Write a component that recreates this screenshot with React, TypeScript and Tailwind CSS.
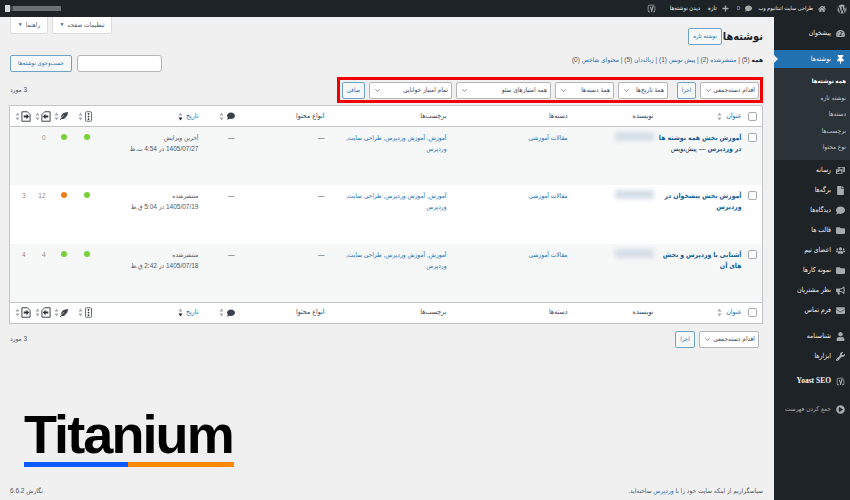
import React from "react";
import {
  FaWordpress,
  FaHome,
  FaComment,
  FaPlus,
  FaThumbtack,
  FaTachometerAlt,
  FaPhotoVideo,
  FaFile,
  FaFolder,
  FaUsers,
  FaBullhorn,
  FaEnvelope,
  FaUser,
  FaWrench,
  FaPlayCircle,
  FaFeatherAlt,
} from "react-icons/fa";
import { ChevronDown } from "lucide-react";

function YoastIcon({ className }: { className?: string }) {
  return (
    <svg viewBox="0 0 12 12" className={className}>
      <path d="M3 1h7v1H3a1 1 0 0 0-1 1v6a1 1 0 0 0 1 1h1v1H3a2 2 0 0 1-2-2V3a2 2 0 0 1 2-2z" fill="currentColor" />
      <path d="M10 3h1v6a2 2 0 0 1-2 2H8v-1h1a1 1 0 0 0 1-1z" fill="currentColor" />
      <path d="M3.5 3.5h1.6L6.2 7l1-4.5H9L6.6 10.5H5l.5-1.8z" fill="currentColor" />
    </svg>
  );
}

function SortArrows({ active }: { active?: boolean }) {
  return (
    <svg viewBox="0 0 5 9" className="w-[5px] h-[9px] shrink-0">
      <path d="M2.5 0.5L4.5 3.5H0.5z" fill="#a7aaad" />
      <path d="M2.5 8.5L0.5 5.5H4.5z" fill={active ? "#1d2327" : "#a7aaad"} />
    </svg>
  );
}

function TrafficIcon() {
  return (
    <svg viewBox="0 0 8 12" className="w-[7px] h-[11px]">
      <rect x="0.6" y="0.6" width="6.8" height="10.8" rx="1" fill="none" stroke="#50575e" strokeWidth="1" />
      <circle cx="4" cy="3" r="1" fill="#2c3338" />
      <circle cx="4" cy="6" r="1" fill="#2c3338" />
      <circle cx="4" cy="9" r="1" fill="#2c3338" />
    </svg>
  );
}

function LinkFileIcon({ flip }: { flip?: boolean }) {
  return (
    <svg viewBox="0 0 11 12" className={`w-[10px] h-[11px] ${flip ? "-scale-x-100" : ""}`}>
      <path d="M1 .8h6l3 3v7.4H1z" fill="none" stroke="#2c3338" strokeWidth="1" />
      <path d="M3 5h3V3l3 3-3 3V7H3z" fill="#2c3338" />
    </svg>
  );
}

function Checkbox() {
  return <input type="checkbox" className="appearance-none block w-[9px] h-[9px] rounded-[2px] border border-[#a7aaad] bg-white" />;
}

function Select({ label, width }: { label: string; width: string }) {
  return (
    <div className={`${width} h-[17px] flex items-center justify-between pr-[3px] pl-[4px] bg-white border border-[#b4b6b9] rounded-[2px] text-[6.5px] text-[#3c434a] whitespace-nowrap overflow-hidden`}>
      <span>{label}</span>
      <ChevronDown size={7} strokeWidth={2} className="shrink-0 text-[#2c3338]" />
    </div>
  );
}

function OutlineButton({ label, width }: { label: string; width: string }) {
  return (
    <div className={`${width} h-[17px] flex items-center justify-center bg-[#f6f7f7] border border-[#6ea3c7] rounded-[2px] text-[6px] text-[#2271b1] whitespace-nowrap`}>
      {label}
    </div>
  );
}

const navTop = [
  { label: "رسانه", icon: FaPhotoVideo },
  { label: "برگه‌ها", icon: FaFile },
  { label: "دیدگاه‌ها", icon: FaComment },
  { label: "قالب ها", icon: FaFolder },
  { label: "اعضای تیم", icon: FaUsers },
  { label: "نمونه کارها", icon: FaFolder },
  { label: "نظر مشتریان", icon: FaBullhorn },
  { label: "فرم تماس", icon: FaEnvelope },
];

const subMenu = ["همه نوشته‌ها", "نوشته تازه", "دسته‌ها", "برچسب‌ها", "نوع محتوا"];

function NavItem({ label, icon: Icon, className = "" }: { label: string; icon: React.ElementType; className?: string }) {
  return (
    <div className={`h-[20px] flex items-center pr-[5px] gap-[5px] text-[6.8px] text-[#f0f0f1] whitespace-nowrap ${className}`}>
      <Icon className="w-[9px] h-[9px] shrink-0 text-[#a7aaad]" />
      <span>{label}</span>
    </div>
  );
}

function Sidebar() {
  return (
    <aside className="w-[76px] shrink-0 bg-[#1d2327] pt-[6px]">
      <NavItem label="پیشخوان" icon={FaTachometerAlt} />
      <div className="relative h-[18px] mt-[7px] flex items-center pr-[5px] gap-[5px] bg-[#2271b1] text-[6.8px] text-white">
        <FaThumbtack className="w-[9px] h-[9px] text-white" />
        <span>نوشته‌ها</span>
        <span className="absolute left-0 top-[5px] w-0 h-0 border-y-[4px] border-y-transparent border-l-[4px] border-l-[#f0f0f1]" />
      </div>
      <div className="bg-[#2c3338] pt-[5px] pb-[4px] h-[92px]">
        {subMenu.map((item, i) => (
          <div key={item} className={`h-[16.5px] flex items-center pr-[4px] whitespace-nowrap ${i === 0 ? "text-[6px] font-bold text-white" : "text-[6.5px] text-[#c3c4c7]"}`}>
            {item}
          </div>
        ))}
      </div>
      {navTop.map((item) => (
        <NavItem key={item.label} {...item} />
      ))}
      <NavItem label="شناسنامه" icon={FaUser} className="mt-[6px]" />
      <NavItem label="ابزارها" icon={FaWrench} />
      <div className="h-[20px] mt-[5px] flex items-center pr-[5px] gap-[5px] text-[7.5px] font-bold font-['Liberation_Serif',serif] text-[#f0f0f1] whitespace-nowrap">
        <YoastIcon className="w-[9px] h-[9px] shrink-0 text-[#a7aaad]" />
        <span>Yoast SEO</span>
      </div>
      <NavItem label="جمع کردن فهرست" icon={FaPlayCircle} className="mt-[8px] !text-[6.5px] !text-[#a7aaad]" />
    </aside>
  );
}

function AdminBar() {
  return (
    <header className="h-[17px] shrink-0 bg-[#1d2327] flex items-center pr-[3px] pl-[5px] text-[6px] text-[#f0f0f1] whitespace-nowrap">
      <FaWordpress className="w-[10px] h-[10px] text-[#a7aaad] ml-[11px]" />
      <FaHome className="w-[8px] h-[8px] text-[#a7aaad] ml-[5px]" />
      <span className="w-[54px] ml-[7px] text-[5.5px]">طراحی سایت اتیتانیوم وب</span>
      <FaComment className="w-[7px] h-[7px] text-[#a7aaad] ml-[5px]" />
      <span className="ml-[8px] text-[#a7aaad]">0</span>
      <FaPlus className="w-[7px] h-[7px] text-[#a7aaad] ml-[5px]" />
      <span className="ml-[8px]">تازه</span>
      <span className="w-[35px] ml-[9px]">دیدن نوشته‌ها</span>
      <YoastIcon className="w-[9px] h-[9px] text-[#a7aaad]" />
      <div className="mr-auto flex items-center blur-[0.6px]">
        <span className="w-[48px] h-[5px] bg-[#6b7075]" />
        <span className="w-[3px] h-[5px] bg-[#3c434a]" />
        <span className="w-[5px] h-[7px] bg-[#d7d9da]" />
      </div>
    </header>
  );
}

const rows = [
  {
    title: "آموزش بخش همه نوشته ها در وردپرس",
    draft: true,
    tags: "آموزش, آموزش وردپرس, طراحی سایت, وردپرس",
    status: "آخرین ویرایش",
    date: "1405/07/27 در 4:54 ب.ظ",
    seo: "#7ad03a",
    read: "#7ad03a",
    a: "0",
    b: "",
    striped: true,
  },
  {
    title: "آموزش بخش پیشخوان در وردپرس",
    draft: false,
    tags: "آموزش, آموزش وردپرس, طراحی سایت, وردپرس",
    status: "منتشرشده",
    date: "1405/07/19 در 5:04 ق.ظ",
    seo: "#7ad03a",
    read: "#ee7c1b",
    a: "12",
    b: "3",
    striped: false,
  },
  {
    title: "آشنایی با وردپرس و بخش های آن",
    draft: false,
    tags: "آموزش, آموزش وردپرس, طراحی سایت, وردپرس",
    status: "منتشرشده",
    date: "1405/07/18 در 2:42 ق.ظ",
    seo: "#7ad03a",
    read: "#7ad03a",
    a: "4",
    b: "4",
    striped: true,
  },
];

function HeadRow({ footer }: { footer?: boolean }) {
  const cell = `h-[21px] p-0 pr-[4px] font-normal text-right align-middle ${footer ? "border-t border-[#c3c4c7]" : "border-b border-[#c3c4c7]"}`;
  return (
    <tr className="bg-white text-[7px] text-[#3c434a]">
      <th className={`${cell} !pr-[5px]`}>
        <Checkbox />
      </th>
      <th className={cell}>
        <div className="flex items-center gap-[4px] text-[#2271b1]">
          <span>عنوان</span>
          <SortArrows />
        </div>
      </th>
      <th className={cell}>نویسنده</th>
      <th className={cell}>دسته‌ها</th>
      <th className={cell}>برچسب‌ها</th>
      <th className={cell}>انواع محتوا</th>
      <th className={cell}>
        <div className="flex items-center gap-[3px]">
          <FaComment className="w-[8px] h-[8px] text-[#3c434a]" />
          <SortArrows />
        </div>
      </th>
      <th className={cell}>
        <div className="flex items-center gap-[3px] text-[#2271b1]">
          <span>تاریخ</span>
          <SortArrows active />
        </div>
      </th>
      <th className={`${cell} !pr-[8px]`}>
        <div className="flex items-center gap-[2px]">
          <TrafficIcon />
          <SortArrows />
        </div>
      </th>
      <th className={cell}>
        <div className="flex items-center gap-[1px]">
          <FaFeatherAlt className="w-[8px] h-[8px] text-[#3c434a]" />
          <SortArrows />
        </div>
      </th>
      <th className={`${cell} !pr-[1px]`}>
        <div className="flex items-center gap-[1px]">
          <LinkFileIcon flip />
          <SortArrows />
        </div>
      </th>
      <th className={`${cell} !pr-[1px]`}>
        <div className="flex items-center gap-[1px]">
          <LinkFileIcon />
          <SortArrows />
        </div>
      </th>
    </tr>
  );
}

function PostsTable() {
  const td = "h-[58.5px] p-0 pt-[5px] pr-[4px] align-top text-right";
  return (
    <table className="w-[753px] table-fixed border-collapse border border-[#c3c4c7] bg-white mt-[2px]">
      <colgroup>
        <col className="w-[17px]" />
        <col className="w-[88px]" />
        <col className="w-[86px]" />
        <col className="w-[121px]" />
        <col className="w-[122px]" />
        <col className="w-[90px]" />
        <col className="w-[36px]" />
        <col className="w-[103px]" />
        <col className="w-[28px]" />
        <col className="w-[20px]" />
        <col className="w-[20px]" />
        <col className="w-[22px]" />
      </colgroup>
      <thead>
        <HeadRow />
      </thead>
      <tbody className="text-[6.5px] leading-[11px] text-[#50575e]">
        {rows.map((row) => (
          <tr key={row.date} className={row.striped ? "bg-[#f6f7f7]" : "bg-white"}>
            <td className={`${td} !pr-[5px]`}>
              <div className="mt-[1px]">
                <Checkbox />
              </div>
            </td>
            <td className={`${td} text-[6.9px] font-bold text-[#135e96]`}>
              {row.title}
              {row.draft && <span className="font-normal text-[#1d2327]"> — پیش‌نویس</span>}
            </td>
            <td className={td}>
              <div className="w-[39px] h-[9px] bg-[#d5dfe8] blur-[2px]" />
            </td>
            <td className={`${td} text-[#2271b1]`}>مقالات آموزشی</td>
            <td className={`${td} text-[#2271b1]`}>
              <div className="w-[106px]">{row.tags}</div>
            </td>
            <td className={td}>—</td>
            <td className={td}>—</td>
            <td className={td}>
              <div>{row.status}</div>
              <div className="whitespace-nowrap">{row.date}</div>
            </td>
            <td className={`${td} !pr-0`}>
              <span className="block w-[6px] h-[6px] rounded-full mr-[10px] mt-[2px]" style={{ background: row.seo }} />
            </td>
            <td className={`${td} !pr-0`}>
              <span className="block w-[6px] h-[6px] rounded-full mr-[5px] mt-[2px]" style={{ background: row.read }} />
            </td>
            <td className={`${td} !pr-[6px] text-[#8c8f94]`}>{row.a}</td>
            <td className={`${td} !pr-[6px] text-[#8c8f94]`}>{row.b}</td>
          </tr>
        ))}
      </tbody>
      <tfoot>
        <HeadRow footer />
      </tfoot>
    </table>
  );
}

export default function App() {
  return (
    <div dir="rtl" className="w-[850px] h-[500px] relative overflow-hidden flex flex-col bg-[#f0f0f1] font-['Liberation_Sans','DejaVu_Sans_Condensed','DejaVu_Sans',sans-serif]">
      <AdminBar />
      <div className="flex-1 flex min-h-0">
        <Sidebar />
        <main className="flex-1 flex flex-col pr-[11px] pl-[10px] min-w-0">
          <div className="h-[30px] flex items-start justify-between">
            <div className="flex items-center gap-[3px] pt-[11px]">
              <h1 className="w-[38px] text-[11px] font-bold text-[#1d2327] leading-[17px] whitespace-nowrap">نوشته‌ها</h1>
              <OutlineButton label="نوشته تازه" width="w-[34px]" />
            </div>
            <div className="flex gap-[4px] text-[6.5px] text-[#50575e]">
              <div className="w-[60px] h-[17px] flex items-center justify-center gap-[3px] bg-white border border-t-0 border-[#dcdcde] rounded-b-[2px]">
                <span>تنظیمات صفحه</span>
                <span className="text-[5px]">▼</span>
              </div>
              <div className="w-[38px] h-[17px] flex items-center justify-center gap-[3px] bg-white border border-t-0 border-[#dcdcde] rounded-b-[2px]">
                <span>راهنما</span>
                <span className="text-[5px]">▼</span>
              </div>
            </div>
          </div>
          <div className="h-[17px] mt-[8px] flex items-start justify-between">
            <div className="text-[6.5px] text-[#50575e] leading-[10px] whitespace-nowrap">
              <span className="font-bold text-[#1d2327]">همه</span> (5) |{" "}
              <span className="text-[#2271b1]">منتشرشده</span> (2) |{" "}
              <span className="text-[#2271b1]">پیش نویس</span> (1) |{" "}
              <span className="text-[#2271b1]">زباله‌دان</span> (5) |{" "}
              <span className="text-[#2271b1]">محتوای شاخص</span> (0)
            </div>
            <div className="flex gap-[5px]">
              <input className="w-[85px] h-[17px] bg-white border border-[#b4b6b9] rounded-[3px]" />
              <OutlineButton label="جست‌وجوی نوشته‌ها" width="w-[62px]" />
            </div>
          </div>
          <div className="h-[26px] mt-[5px] flex items-center justify-between">
            <div className="w-[426px] h-[26px] flex items-center gap-[4px] pr-[1px] border-[3px] border-[#f00000]">
              <Select label="اقدام دسته‌جمعی" width="w-[59px]" />
              <OutlineButton label="اجرا" width="w-[19px] ml-[5px]" />
              <Select label="همهٔ تاریخ‌ها" width="w-[50px]" />
              <Select label="همهٔ دسته‌ها" width="w-[59px]" />
              <Select label="همه امتیازهای سئو" width="w-[95px]" />
              <Select label="تمام امتیاز خوانایی" width="w-[83px]" />
              <OutlineButton label="صافی" width="w-[23px]" />
            </div>
            <span className="text-[6.5px] text-[#50575e]">3 مورد</span>
          </div>
          <PostsTable />
          <div className="h-[17px] mt-[7px] flex items-center justify-between">
            <div className="flex items-center gap-[4px] pr-[4px]">
              <Select label="اقدام دسته‌جمعی" width="w-[60px]" />
              <OutlineButton label="اجرا" width="w-[20px]" />
            </div>
            <span className="text-[6.5px] text-[#50575e]">3 مورد</span>
          </div>
          <footer className="mt-auto h-[14px] flex items-start justify-between text-[6.5px] text-[#50575e]">
            <span>
              سپاسگزاریم از اینکه سایت خود را با <span className="text-[#2271b1]">وردپرس</span> ساخته‌اید.
            </span>
            <span>نگارش 6.6.2</span>
          </footer>
        </main>
      </div>

      {/* watermark over the page */}
      <div dir="ltr" className="absolute left-[24px] top-[406px] w-[210px]">
        <div className="h-[56px] text-[54px] leading-[56px] font-bold tracking-[-1.9px] text-black whitespace-nowrap">Titanium</div>
        <div className="flex h-[5px]">
          <div className="w-[104px] bg-[#0a5cff]" />
          <div className="flex-1 bg-[#ff8800]" />
        </div>
      </div>
    </div>
  );
}
